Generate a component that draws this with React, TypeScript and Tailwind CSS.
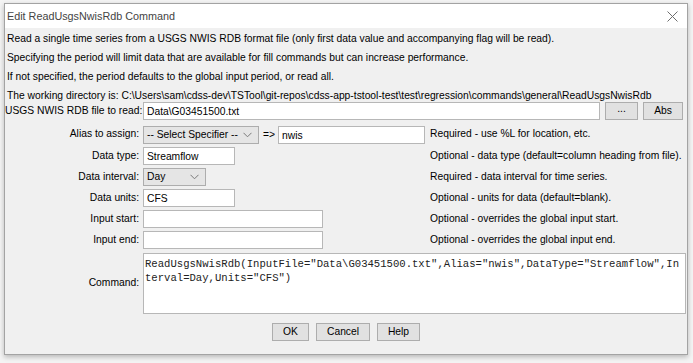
import React, { useState } from "react"

const ui = { fontFamily: '"Liberation Sans", Arial, sans-serif' }
const mono = { fontFamily: '"Liberation Mono", monospace' }

const Chevron: React.FC = () => (
    <svg width="9" height="6" viewBox="0 0 9 6" className="shrink-0">
        <path d="M0.5 0.8 L4.5 4.8 L8.5 0.8" fill="none" stroke="#7a7a7a" strokeWidth="1" />
    </svg>
)

const Combo: React.FC<{ value: string, width: string }> = ({ value, width }) => (
    <div className={`${width} h-[18px] flex items-center justify-between bg-[#e5e5e5] border border-[#adadad] pl-[3px] pr-[6px] whitespace-nowrap`}>
        <span>{value}</span>
        <Chevron />
    </div>
)

const Field: React.FC<{ value: string, onChange: (v: string) => void, width: string }> = ({ value, onChange, width }) => (
    <input
        className={`${width} h-[18px] block bg-white border border-[#b7b7b7] px-[3px] outline-none text-[10.3px] leading-none`}
        style={ui}
        value={value}
        onChange={(e) => onChange(e.target.value)}
    />
)

const Label: React.FC<{ text: string }> = ({ text }) => (
    <div className="text-right whitespace-nowrap">{text}</div>
)

export default function App() {
    const [file, setFile] = useState("Data\\G03451500.txt")
    const [alias, setAlias] = useState("nwis")
    const [dataType, setDataType] = useState("Streamflow")
    const [units, setUnits] = useState("CFS")
    const [start, setStart] = useState("")
    const [end, setEnd] = useState("")

    const command = `ReadUsgsNwisRdb(InputFile="${file}",Alias="${alias}",DataType="${dataType}",Interval=Day,Units="${units}")`

    return (
        <div className="w-[693px] h-[363px] overflow-hidden bg-[#f4f4f4] pt-[3px] pl-[4px]" style={ui}>
            <div className="w-[684px] h-[352px] flex flex-col border border-[#a3a3a3] bg-[#f0f0f0] shadow-[0_2px_5px_rgba(0,0,0,0.25)] text-[10.3px] text-black">
                {/* title bar */}
                <div className="h-[24px] shrink-0 bg-white flex items-center justify-between pl-[2px] pr-[9px]">
                    <span className="text-[10.8px] text-[#444]">Edit ReadUsgsNwisRdb Command</span>
                    <svg width="11" height="11" viewBox="0 0 11 11">
                        <path d="M0.5 0.5 L10.5 10.5 M10.5 0.5 L0.5 10.5" stroke="#6e6e6e" strokeWidth="1" />
                    </svg>
                </div>

                {/* notes */}
                <div className="flex flex-col pl-[2px] pt-[1px] leading-[19px] whitespace-nowrap">
                    <div>Read a single time series from a USGS NWIS RDB format file (only first data value and accompanying flag will be read).</div>
                    <div>Specifying the period will limit data that are available for fill commands but can increase performance.</div>
                    <div>If not specified, the period defaults to the global input period, or read all.</div>
                    <div>The working directory is: C:\Users\sam\cdss-dev\TSTool\git-repos\cdss-app-tstool-test\test\regression\commands\general\ReadUsgsNwisRdb</div>
                </div>

                {/* form */}
                <div className="grid grid-cols-[134px_283px_1fr] gap-x-[4px] gap-y-[3px] items-center mt-[-3px]">
                    <Label text="USGS NWIS RDB file to read:" />
                    <div className="col-span-2 flex items-center gap-[5px]">
                        <Field value={file} onChange={setFile} width="w-[457px]" />
                        <button className="w-[33px] h-[18px] bg-[#e1e1e1] border border-[#adadad] leading-none pb-[3px]">...</button>
                        <button className="w-[40px] h-[18px] bg-[#e1e1e1] border border-[#adadad] leading-none">Abs</button>
                    </div>

                    <Label text="Alias to assign:" />
                    <div className="flex items-center mt-[3px]">
                        <Combo value="-- Select Specifier --" width="w-[116px]" />
                        <span className="ml-[4px] mr-[3px]">=&gt;</span>
                        <Field value={alias} onChange={setAlias} width="w-[147px]" />
                    </div>
                    <div className="whitespace-nowrap">Required - use %L for location, etc.</div>

                    <Label text="Data type:" />
                    <div><Field value={dataType} onChange={setDataType} width="w-[92px]" /></div>
                    <div className="whitespace-nowrap">Optional - data type (default=column heading from file).</div>

                    <Label text="Data interval:" />
                    <div><Combo value="Day" width="w-[63px]" /></div>
                    <div className="whitespace-nowrap">Required - data interval for time series.</div>

                    <Label text="Data units:" />
                    <div><Field value={units} onChange={setUnits} width="w-[92px]" /></div>
                    <div className="whitespace-nowrap">Optional - units for data (default=blank).</div>

                    <Label text="Input start:" />
                    <div><Field value={start} onChange={setStart} width="w-[180px]" /></div>
                    <div className="whitespace-nowrap">Optional - overrides the global input start.</div>

                    <Label text="Input end:" />
                    <div><Field value={end} onChange={setEnd} width="w-[180px]" /></div>
                    <div className="whitespace-nowrap">Optional - overrides the global input end.</div>

                    <Label text="Command:" />
                    <div className="col-span-2 mt-[1px]">
                        <div className="w-[543px] h-[61px] bg-white border border-[#b7b7b7] px-[1px] pt-[3px] text-[10.6px] leading-[14px] break-all text-[#222]" style={mono}>
                            {command}
                        </div>
                    </div>
                </div>

                {/* buttons */}
                <div className="flex justify-center gap-[7px] mt-[9px]">
                    <button className="w-[37px] h-[18px] bg-[#e1e1e1] border border-[#adadad] leading-none">OK</button>
                    <button className="w-[54px] h-[18px] bg-[#e1e1e1] border border-[#adadad] leading-none">Cancel</button>
                    <button className="w-[43px] h-[18px] bg-[#e1e1e1] border border-[#adadad] leading-none">Help</button>
                </div>
            </div>
        </div>
    )
}
